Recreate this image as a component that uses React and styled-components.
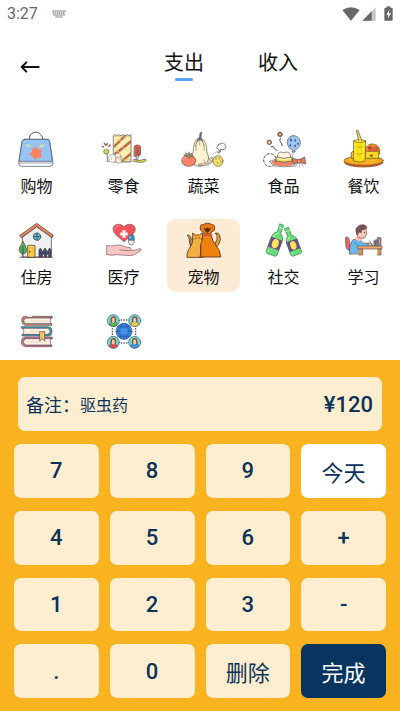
import React, { useState } from 'react';
import styled, { createGlobalStyle, css } from 'styled-components';

const colors = {
  orange: '#f9b321',
  cream: '#feedcf',
  navy: '#0b3359',
  done: '#07355f',
  blue: '#5ba6f4',
  selected: '#fdebd6',
  status: '#686868',
};

const BagIcon = () => (
  <Drawing viewBox="44 33 132 108" stroke="#4c5363" strokeWidth="2.2" strokeLinejoin="round" strokeLinecap="round">
    <path d="M87 58C85 29 126 29 127 58" fill="none" strokeWidth="3" />
    <path d="M74 58H140Q147 58 148 65L158 127Q159 139 149 139H64Q54 139 55 128L65 65Q67 58 74 58Z" fill="#fff" />
    <path d="M74 58H140Q147 58 148 65L156 124H56L65 65Q67 58 74 58Z" fill="#98c3f5" />
    <path d="M57 129H156" stroke="#78818f" />
    <path d="M106 82l6 9 11 0-5 9 4 11-11-1-7 6-5-8-9-6 7-5 2-10 6 1z" fill="#f98360" stroke="#f98360" strokeWidth="5" />
    <path d="M80 73l7 4M82 79l7-1M128 73l-6 3M129 78l-8 1" stroke="#dce489" strokeWidth="4" />
    <path d="M80 70l4 2M130 70l-4 2" stroke="#77a8da" />
  </Drawing>
);

const SnackIcon = () => (
  <Drawing viewBox="303 33 132 108" stroke="#4d4a4c" strokeWidth="2" strokeLinejoin="round" strokeLinecap="round">
    <path d="M338 47l5-3 5 3 6-3 6 3 6-3 6 3 6-3 6 3 6-3v82h-52z" fill="#fdedb5" />
    <path d="M339 75l30-29h10l-40 39zM339 100l51-41v10l-51 41zM354 126l36-30v10l-27 21z" fill="#b96b43" stroke="none" />
    <path d="M339 50l51 0M339 119H390" stroke="#c7b98d" fill="none" />
    <path d="M347 60l14 0M364 82l16 10M346 91l10 6" stroke="#f8cf7f" strokeWidth="3" />
    <path d="M400 80q1-5 7-5 9-1 12 5l-1 24q-3 7-18 5z" fill="#ec5b45" />
    <path d="M405 82h7v7h3v15h-11v-9h2z" fill="#a95b4f" stroke="none" />
    <path d="M406 107l-1 17h5l1-16" fill="#fff" />
    <path d="M399 118q17 8 34-1l2 5q-12 9-34 2z" fill="#f6db31" />
    <path d="M315 124H399" stroke="#9a8f83" />
    <circle cx="316" cy="95" r="8" fill="#bbc65d" stroke="#858c57" />
    <circle cx="315" cy="94" r="3" fill="#ecd277" stroke="none" />
    <path d="M318 103l2 21" />
    <path d="M304 79l4 2M310 70l4 5M318 70v5M327 75l-3 4" stroke="#9d4745" strokeWidth="4" />
    <circle cx="334" cy="115" r="12" fill="#fff" stroke="#99928b" />
    <circle cx="351" cy="109" r="9" fill="#fff4db" stroke="#99928b" />
    <circle cx="353" cy="120" r="10" fill="#f9e8cf" stroke="#99928b" />
    <path d="M328 110l6 3-4 7M342 108l7 5-5 9M355 114l5 6" stroke="#c6aa83" fill="none" />
  </Drawing>
);

const VegetableIcon = () => (
  <Drawing viewBox="64 33 132 108" stroke="#5b5653" strokeWidth="2" strokeLinejoin="round" strokeLinecap="round">
    <path d="M113 55C101 59 98 79 98 95C92 111 94 130 104 136C115 141 131 139 137 129C148 118 142 102 138 96C140 78 133 58 121 55Z" fill="#fff4d2" />
    <path d="M113 57q-9 14-7 35M121 57q13 16 10 35M117 57v18M108 65l-4 14M126 65l4 14" fill="none" stroke="#8c8569" />
    <path d="M110 63l4-9q3-2 6 0l6 9-8-4z" fill="#8c8c9a" />
    <path d="M116 55l2-16 5-3-2 19z" fill="#6b6d94" stroke="#5f6187" />
    <path d="M115 132q20-1 26-9 3-8 13-12l4 3-4 13q-14 12-39 10z" fill="#c9bda2" stroke="#85796b" />
    <path d="M125 129l7 6M132 124l8 8M140 119l8 8M149 113l5 6" stroke="#f7ecd3" strokeWidth="3" />
    <ellipse cx="84" cy="122" rx="21" ry="17" fill="#fb8066" />
    <path d="M67 118q4-6 8-5" fill="none" stroke="#ffc6a9" strokeWidth="3" />
    <path d="M82 110l-13-5 9-1-4-6 9 5 2-8 2 8 8-4-4 6 8 4-10 0-2 5z" fill="#8a9468" strokeWidth="1.5" />
    <path d="M101 137q8-10 2-22M142 136q-10-4-13-16" fill="none" stroke="#9d9883" />
    <ellipse cx="172" cy="123" rx="15" ry="16" fill="#f5e065" />
    <path d="M166 112v7M176 112v6M170 126v5M180 123v5" stroke="#857a4d" />
    <path d="M178 93l-8-6q-5-6 2-9 0-8 9-7 10-4 12 4 6 6 0 11-7 7-13 1l-2 11q-5 3-7 0z" fill="#fff" stroke="#6c6f84" strokeWidth="2.6" />
    <path d="M156 103l7-6 6-2" fill="none" stroke="#94909a" />
  </Drawing>
);

const FoodIcon = () => (
  <Drawing viewBox="304 33 132 108" stroke="#575255" strokeWidth="2" strokeLinejoin="round" strokeLinecap="round">
    <circle cx="328" cy="120" r="19" fill="#fff" strokeWidth="3" strokeDasharray="7 6" />
    <path d="M327 124q45-20 81 0l-8 14q-29 5-59 0z" fill="#fff" />
    <path d="M334 125q40-14 66 0l-6 10q-31 5-53-1z" fill="#f88369" stroke="#ca6655" />
    <path d="M345 123l8-22q2-6 9-5 9 5 16 0 7-1 10 6l7 21q-24 7-50 0z" fill="#fff6e3" />
    <path d="M350 111q21 8 41 0l4 12q-25 7-49 0z" fill="#f3da51" />
    <path d="M349 116q21 7 43 0" fill="none" stroke="#fff8bf" strokeWidth="3" />
    <path d="M398 94q-4 11-1 25" fill="none" stroke="#7680a0" />
    <path d="M399 47c-13 0-20 10-19 22 1 12 9 19 17 22l-3 5h10l-3-5c10-3 18-12 18-23 0-12-8-21-20-21z" fill="#9dc8f5" />
    <path d="M391 58v4M404 60v3M389 75v3M403 76v3M412 70v2" stroke="#395a84" strokeWidth="5" />
    <path d="M395 114l18 6 19-9 3 21-18-5-18 5z" fill="#e97550" />
    <rect x="412" y="118" width="8" height="11" fill="#f4a46d" />
    <path d="M410 129l-5 11M421 129l6 10M416 130v11" stroke="#7f857d" />
    <circle cx="326" cy="67" r="7" fill="#a88a53" />
    <circle cx="358" cy="43" r="7" fill="#9a6040" />
    <path d="M326 64v6M323 67h6" stroke="#efe0aa" strokeWidth="3" />
    <path d="M358 40v6M355 43h6" stroke="#e6b299" strokeWidth="3" />
    <path d="M332 79q8-1 9 5t8 7M359 54q-4 9 1 13t4 10" fill="none" strokeWidth="3" />
  </Drawing>
);

const DrinkIcon = () => (
  <Drawing viewBox="544 33 132 108" stroke="#765b1b" strokeWidth="2.2" strokeLinejoin="round" strokeLinecap="round">
    <ellipse cx="609" cy="127" rx="58" ry="14" fill="#e34c38" />
    <ellipse cx="609" cy="122" rx="59" ry="14" fill="#fca522" />
    <ellipse cx="607" cy="121" rx="43" ry="9" fill="#f3b522" stroke="none" />
    <path d="M612 96c2-29 34-31 44-11 4 10-1 23-10 28h-22z" fill="#f58a36" />
    <path d="M622 83l8-7 8 5 8-4 7 8-4 10h-26z" fill="#ee5842" stroke="none" />
    <circle cx="627" cy="84" r="3" fill="#874529" />
    <circle cx="649" cy="87" r="3" fill="#f1c533" />
    <rect x="615" y="94" width="39" height="21" fill="#f6d823" />
    <path d="M630 105h5v4h-5z" fill="#82561e" />
    <path d="M572 99q2-6 11-6v12l15 3v8h-24q-4-8-2-17z" fill="#edcf25" />
    <path d="M579 63h36l-2 60q-17 7-33 0z" fill="#f7df15" />
    <ellipse cx="597" cy="63" rx="18" ry="4" fill="#fff053" />
    <path d="M579 80q18 3 35 0M579 100q18 5 34 0" fill="none" stroke="#c19b1d" />
    <path d="M584 70v44M609 69v45" stroke="#fff451" strokeWidth="3" />
    <path d="M594 61l-7-30h5l11 30" fill="#e9d776" />
  </Drawing>
);

const HouseIcon = () => (
  <Drawing viewBox="44 36 132 108" stroke="#493e43" strokeWidth="2.2" strokeLinejoin="round" strokeLinecap="round">
    <path d="M67 78l42-32 44 31v64H67z" fill="#edeff1" />
    <path d="M59 76l50-36 50 36-4 7-46-32-45 32z" fill="#d97753" />
    <path d="M65 75l44-31 44 31" fill="none" stroke="#f59a6a" strokeWidth="2" />
    <circle cx="110" cy="80" r="11" fill="#54bfdf" />
    <path d="M99 80h22M110 69v22" />
    <path d="M82 141v-34q12-3 22 0v34z" fill="#fed140" />
    <path d="M88 138v-25h10v25" fill="none" stroke="#eba839" />
    <circle cx="88" cy="125" r="1" />
    <path d="M68 95c-8 12-14 23-10 30 4 8 17 8 20 0 3-9-4-20-10-30z" fill="#50b65b" />
    <path d="M68 109v32M67 123l-5-5" fill="none" />
    <path d="M116 141v-21l4-6 4 6v4h6v-4l4-6 4 6v4h6v-4l4-6 4 6v21h-7v-8h-6v8h-7v-8h-6v8z" fill="#40496f" />
    <path d="M58 142H157" />
  </Drawing>
);

const MedicalIcon = () => (
  <Drawing viewBox="303 36 132 108" stroke="#705961" strokeWidth="2" strokeLinejoin="round" strokeLinecap="round">
    <path d="M369 95C361 87 336 72 336 57C336 42 360 37 369 51C378 37 403 42 403 58C403 72 378 87 369 95Z" fill="#f5535a" />
    <path d="M341 58q1-11 13-10" fill="none" stroke="#ff8b8d" strokeWidth="3" />
    <path d="M365 61h8v7h7v8h-7v7h-8v-7h-7v-8h7z" fill="#fff" stroke="#f9c2c5" />
    <rect x="383" y="74" width="16" height="31" rx="8" fill="#e8f4fb" />
    <path d="M383 90v-8q0-8 8-8t8 8v8z" fill="#2f93c4" />
    <path d="M387 80v4" stroke="#b4e6ff" strokeWidth="3" />
    <path d="M318 107q15 2 25-1 12-2 21 1 16 7 24 6l3 8q8 2 25-5 7 0 3 6l-21 13q-10 3-22 1l-29-2q-15 3-29 0z" fill="#fac4c5" />
    <path d="M356 119q13 4 34 3" fill="none" />
  </Drawing>
);

const PetIcon = () => (
  <Drawing viewBox="64 36 132 108" stroke="#5c351d" strokeWidth="2.6" strokeLinejoin="round" strokeLinecap="round">
    <path d="M90 108q-4-9-4-18 0-12-7-14 10-3 12 10v14z" fill="#e9a53c" />
    <path d="M164 100q8-12 5-23-1-7-6-7 10-5 14 6 5 14-3 27l-7 8z" fill="#e9a53c" />
    <path d="M79 141v-8q3-15 12-26 5-7 5-18V69l8 6h12l9-6 4 10v62z" fill="#f0af3f" />
    <path d="M126 75h26q2 17 12 29 16 16 16 37h-60V104q6-8 6-29z" fill="#ef820f" />
    <path d="M120 106v27q-2 3-2 8" fill="none" />
    <path d="M128 44q6-5 12-4 8-1 13 4l6 1q6 8 2 16l-7 4q-2 7-8 7h-12q-6 0-8-7l-6-4q-4-9 1-16z" fill="#ef7c10" />
    <path d="M128 75h25" stroke="#df4d4c" strokeWidth="5" />
    <path d="M131 54v3M150 54v3M106 83v2M115 83v2" strokeWidth="3" />
    <path d="M134 57q6-6 13 0l-3 8h-8z" fill="#45291b" />
    <path d="M140 63v5M93 87h5M121 87l5-1" />
  </Drawing>
);

const BottleIcon = () => (
  <Drawing viewBox="304 36 132 108" stroke="#408d5a" strokeWidth="2.2" strokeLinejoin="round" strokeLinecap="round">
    <g transform="rotate(20 347 89)">
      <path d="M341 41h12v26q9 6 12 17v47q0 6-6 6h-23q-6 0-6-6V84q2-12 11-18z" fill="#67dc7b" />
      <path d="M330 86h35v31h-35z" fill="#6f4c82" stroke="none" />
      <ellipse cx="348" cy="101" rx="10" ry="14" fill="#ffe35b" stroke="none" />
      <path d="M341 51h12M336 124v7M345 69q-8 5-9 14" fill="none" stroke="#b5f6af" strokeWidth="3" />
    </g>
    <g transform="rotate(-20 394 98)">
      <path d="M388 51h12v25q9 6 12 17v38q0 6-6 6h-22q-6 0-6-6V93q2-12 10-17z" fill="#67dc7b" />
      <path d="M378 91h34v31h-34z" fill="#6f4c82" stroke="none" />
      <ellipse cx="395" cy="107" rx="9" ry="13" fill="#ffe35b" stroke="none" />
      <path d="M388 61h12M384 127v5M393 79q-8 4-9 10" fill="none" stroke="#b5f6af" strokeWidth="3" />
    </g>
  </Drawing>
);

const StudyIcon = () => (
  <Drawing viewBox="544 36 132 108" stroke="#605365" strokeWidth="2" strokeLinejoin="round" strokeLinecap="round">
    <path d="M554 87q-2-5 4-6 6 0 7 5l4 28q0 7-7 5-5-2-6-8z" fill="#ec6063" />
    <path d="M564 121h23v7h-18v6" fill="#8c7c99" />
    <path d="M566 131q0-31 11-42 10-5 21 0l10 10 17 1-2 10-19 5v16z" fill="#67b8eb" />
    <path d="M583 97q4 13 20 14" fill="none" stroke="#357cae" />
    <path d="M585 80l-1 9 14 5 6-5-1-9z" fill="#ffc2ad" stroke="none" />
    <path d="M588 61q0-10 14-12 14 0 14 12l3 11-4 3-2 8q-10 5-21-2-7-8-4-20z" fill="#ffc7b1" />
    <path d="M590 75q-9-17 0-24 6-7 15-7 13 0 13 11-5 5-15 4l-1 9-7-2z" fill="#77514f" />
    <path d="M623 99q9-2 14 7-5 3-14 1zM634 105l-8-13" fill="#ffc5ae" />
    <path d="M591 108h73v9h-71z" fill="#f0a866" />
    <path d="M594 117h12v18h-12M650 117h11v18h-11" fill="#dc9159" />
    <path d="M640 92h5v15h-5zM645 89h6v18h-6z" fill="#72809b" strokeWidth="1.5" />
    <path d="M651 83h10v24h-10z" fill="#8d7b8b" />
    <path d="M657 87v14" stroke="#ed9b80" strokeWidth="3" />
    <circle cx="611" cy="68" r="1" fill="#5b4142" />
  </Drawing>
);

const BooksIcon = () => (
  <Drawing viewBox="44 39 132 108" stroke="#535064" strokeWidth="2" strokeLinejoin="round" strokeLinecap="round">
    <path d="M155 49H73Q63 50 64 62T74 76H155V71H76Q69 68 70 61T77 54H155Z" fill="#e38b5b" />
    <path d="M152 54H78Q70 57 70 63T78 71H152Q146 62 152 54Z" fill="#fff1df" />
    <path d="M64 80H145Q156 82 155 95T145 108H65V103H143Q150 100 149 94T142 85H64Z" fill="#359fac" />
    <path d="M68 85H142Q149 87 149 94T142 103H68Q74 94 68 85Z" fill="#fff1df" />
    <path d="M155 111H74Q63 113 63 125T74 140H155V135H77Q69 132 69 125T77 116H155Z" fill="#e77391" />
    <path d="M152 116H78Q69 119 69 125T77 135H152Q146 126 152 116Z" fill="#fff1df" />
    <path d="M89 63h50M91 94h48M88 126h51" stroke="#c9b7a0" strokeWidth="1.5" />
    <path d="M81 48h13" stroke="#fff" strokeWidth="4" />
    <path d="M119 95h14v28l-7-7-7 7z" fill="#f4c65e" />
  </Drawing>
);

const contacts = [
  { x: 337, y: 62, shirt: '#5eb657' },
  { x: 401, y: 62, shirt: '#ffce3d' },
  { x: 337, y: 127, shirt: '#eb484e' },
  { x: 401, y: 127, shirt: '#3997e1' },
];

const CommunityIcon = () => (
  <Drawing viewBox="303 39 132 108" stroke="#405266" strokeWidth="2" strokeLinejoin="round" strokeLinecap="round">
    {contacts.map(({ x, y, shirt }) => (
      <g key={`${x}-${y}`} transform={`translate(${x} ${y})`}>
        <circle r="18" fill="#6edbd4" />
        <path d="M-8 4Q-11-12 0-13T8 4z" fill="#8e5347" stroke="none" />
        <path d="M-12 12Q-10 3-4 4h8q7 0 8 8-12 11-24 0z" fill={shirt} strokeWidth="1.5" />
        <path d="M-4-6q4-5 8 0v9l-4 4-4-4z" fill="#ffc49d" stroke="none" />
      </g>
    ))}
    <circle cx="369" cy="94" r="24" fill="#387fdb" stroke="#2f579e" />
    <path d="M345 94h48M350 80h38M350 109h38" stroke="#2757a6" fill="none" />
    <ellipse cx="369" cy="94" rx="12" ry="24" fill="none" stroke="#2757a6" />
    <path d="M358 85h22v17h-22z" fill="#4292e7" stroke="none" />
    <path d="M361 60h17M361 129h17M334 86v18M404 86v18" strokeWidth="4" strokeDasharray="1 7" />
  </Drawing>
);

const categories = [
  { id: 'shopping', label: '购物', Icon: BagIcon },
  { id: 'snacks', label: '零食', Icon: SnackIcon },
  { id: 'vegetables', label: '蔬菜', Icon: VegetableIcon },
  { id: 'food', label: '食品', Icon: FoodIcon },
  { id: 'dining', label: '餐饮', Icon: DrinkIcon },
  { id: 'housing', label: '住房', Icon: HouseIcon },
  { id: 'medical', label: '医疗', Icon: MedicalIcon },
  { id: 'pets', label: '宠物', Icon: PetIcon },
  { id: 'social', label: '社交', Icon: BottleIcon },
  { id: 'study', label: '学习', Icon: StudyIcon },
  { id: 'books', Icon: BooksIcon },
  { id: 'community', Icon: CommunityIcon },
];

const keys = ['7', '8', '9', '今天', '4', '5', '6', '+', '1', '2', '3', '-', '.', '0', '删除', '完成'];
const variants = { 今天: 'light', 删除: 'word', 完成: 'done' };

const StatusBar = () => (
  <Status>
    <span>3:27</span>
    <svg width="14" height="8" viewBox="0 0 42 24" fill="none" stroke="#858585" aria-hidden="true">
      <path d="M1 3h40M2 9h38M4 15h34" strokeWidth="4" strokeDasharray="4 2" />
      <path d="M10 21h22" strokeWidth="3" />
    </svg>
    <StatusIcons>
      <svg width="18" height="14" viewBox="0 0 54 42" fill={colors.status} aria-hidden="true">
        <path d="M1 9Q27-8 53 9L27 41Z" />
      </svg>
      <svg width="14" height="14" viewBox="0 0 42 42" aria-hidden="true">
        <path d="M41 1v40H1z" fill="#c6c6c6" />
        <path d="M29 13v28H1z" fill={colors.status} />
      </svg>
      <svg width="9" height="15" viewBox="0 0 27 45" aria-hidden="true">
        <path d="M8 1h11v4h4q3 0 3 3v33q0 3-3 3H4q-3 0-3-3V8q0-3 3-3h4z" fill={colors.status} />
        <path d="M16 11L7 26h6l-2 12 10-16h-6z" fill="#fff" />
      </svg>
    </StatusIcons>
  </Status>
);

export default function App() {
  const [tab, setTab] = useState('支出');
  const [category, setCategory] = useState('pets');
  const [note, setNote] = useState('驱虫药');

  return (
    <Root>
      <GlobalStyle />
      <StatusBar />
      <Header>
        <Back aria-label="返回">
          <svg width="20" height="14" viewBox="0 0 60 42" fill="none" stroke="#111" strokeWidth="6" strokeLinecap="round" strokeLinejoin="round" aria-hidden="true">
            <path d="M56 21H5M19 7L5 21l14 14" />
          </svg>
        </Back>
        <Tabs>
          {['支出', '收入'].map(name => (
            <Tab key={name} $active={tab === name} onClick={() => setTab(name)}>{name}</Tab>
          ))}
        </Tabs>
      </Header>

      <Categories>
        {categories.map(({ id, label, Icon }) => (
          <Category key={id} aria-label={label || id} $selected={category === id} onClick={() => setCategory(id)}>
            <Icon />
            {label && <CategoryName>{label}</CategoryName>}
          </Category>
        ))}
      </Categories>

      <Panel>
        <NoteBar>
          <NoteLabel htmlFor="note">备注：</NoteLabel>
          <NoteInput id="note" value={note} onChange={e => setNote(e.target.value)} />
          <Amount>¥120</Amount>
        </NoteBar>
        <Keypad>
          {keys.map(key => (
            <Key key={key} $variant={variants[key]}>{key}</Key>
          ))}
        </Keypad>
      </Panel>
    </Root>
  );
}

const GlobalStyle = createGlobalStyle`
  * {
    box-sizing: border-box;
  }

  body {
    margin: 0;
    background: #fff;
  }

  button, input {
    margin: 0;
    padding: 0;
    border: 0;
    background: none;
    color: inherit;
    font: inherit;
  }

  button {
    cursor: pointer;
  }
`

const Root = styled.div`
  display: flex;
  flex-direction: column;
  height: 100vh;
  color: #111;
  font-family: Roboto, 'Noto Sans CJK SC', sans-serif;
`

const Status = styled.div`
  display: flex;
  align-items: center;
  flex: none;
  gap: 14px;
  height: 27px;
  padding: 0 7px;
  color: ${colors.status};
  font-size: 16px;
`

const StatusIcons = styled.div`
  display: flex;
  align-items: center;
  gap: 2px;
  margin-left: auto;

  svg:last-child {
    margin-left: 6px;
  }
`

const Header = styled.header`
  display: flex;
  align-items: flex-start;
  flex: none;
  gap: 20px;
  height: 101px;
  padding: 24px 0 0 20px;
`

const Back = styled.button`
  display: flex;
  align-items: center;
  width: 22px;
  height: 32px;
`

const Tabs = styled.nav`
  display: flex;
  justify-content: center;
  flex: 1;
  gap: 54px;
`

const Tab = styled.button`
  display: flex;
  flex-direction: column;
  align-items: center;
  gap: 3px;
  font-size: 20px;
  line-height: 24px;

  &::after {
    content: '';
    width: 18px;
    height: 3px;
    border-radius: 2px;
    background: ${({ $active }) => ($active ? colors.blue : 'transparent')};
  }
`

const Categories = styled.main`
  display: grid;
  grid-template-columns: 87fr 80fr 80fr 80fr 73fr;
  align-content: start;
  flex: 1;
  row-gap: 18px;
  min-height: 0;
  overflow-y: auto;
  scrollbar-width: none;
`

const Category = styled.button`
  display: flex;
  flex-direction: column;
  align-items: center;
  width: 73px;
  height: 73px;
  padding-top: 3px;
  border-radius: 9px;
  background: ${({ $selected }) => ($selected ? colors.selected : 'transparent')};
`

const Drawing = styled.svg.attrs({ 'aria-hidden': true })`
  flex: none;
  width: 44px;
  height: 36px;
  overflow: visible;
`

const CategoryName = styled.span`
  margin-top: 10px;
  font-size: 16px;
  line-height: 20px;
`

const Panel = styled.section`
  flex: none;
  padding: 17px 14px 13px;
  background: ${colors.orange};
  color: ${colors.navy};
`

const NoteBar = styled.div`
  display: flex;
  align-items: center;
  height: 54px;
  margin: 0 4px 13px;
  padding: 0 9px 0 8px;
  border-radius: 7px;
  background: ${colors.cream};
`

const NoteLabel = styled.label`
  font-size: 18px;
`

const NoteInput = styled.input`
  flex: 1;
  min-width: 0;
  font-size: 16px;
  outline: none;
`

const Amount = styled.output`
  font-size: 22px;
  font-weight: 500;
`

const Keypad = styled.div`
  display: grid;
  grid-template-columns: repeat(4, 1fr);
  grid-auto-rows: 1fr;
  gap: 13px 11px;
  height: 254px;
`

const Key = styled.button`
  border-radius: 7px;
  background: ${colors.cream};
  font-size: 22px;
  font-weight: ${({ $variant }) => ($variant ? 400 : 500)};

  ${({ $variant }) => $variant === 'light' && css`
    background: #fff;
  `}

  ${({ $variant }) => $variant === 'done' && css`
    background: ${colors.done};
    color: #fff;
  `}
`
